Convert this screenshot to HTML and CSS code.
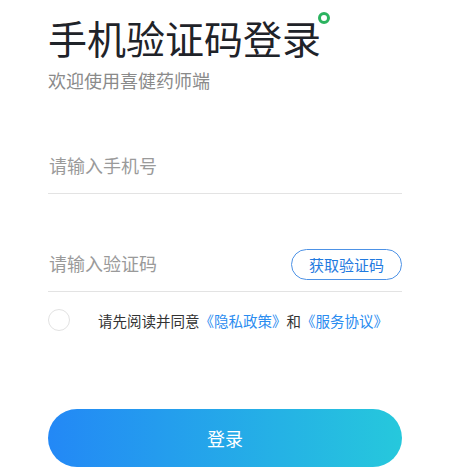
FILE: index.html
```html
<!DOCTYPE html>
<html>
<head>
  <meta charset="utf-8">
  <title>手机验证码登录</title>
  <link rel="stylesheet" href="styles.css">
</head>
<body>
  <div class="page">
    <div class="header">
      <h1 class="title">手机验证码登录<span class="dot"></span></h1>
      <p class="subtitle">欢迎使用喜健药师端</p>
    </div>

    <form class="login-form">
      <div class="field">
        <input type="text" name="phone" placeholder="请输入手机号">
      </div>
      <div class="field field-code">
        <input type="text" name="code" placeholder="请输入验证码">
        <button type="button" class="code-button">获取验证码</button>
      </div>

      <div class="agree-row">
        <span class="check"></span>
        <span class="agree-text">请先阅读并同意<a href="#">《隐私政策》</a>和<a href="#">《服务协议》</a></span>
      </div>

      <button type="button" class="login-button">登录</button>
    </form>
  </div>
</body>
</html>
```

FILE: styles.css
```css
body {
  margin: 0;
  padding: 0;
  background-color: #fff;
  font-family: "Noto Sans CJK SC", "Noto Sans", sans-serif;
}

.page {
  padding: 13px 48px 0 48px;
}

/* Title with the little green ring at its corner */
.title {
  position: relative;
  display: inline-block;
  margin: 0;
  font-size: 39px;
  font-weight: normal;
  line-height: 48px;
  color: #1f2329;
}

.dot {
  position: absolute;
  right: -9px;
  top: -1px;
  width: 6px;
  height: 6px;
  border: 3px solid #2bb35f;
  border-radius: 50%;
}

.subtitle {
  margin: 7px 0 0 0;
  font-size: 18px;
  line-height: 24px;
  color: #8a8a8a;
}

.login-form {
  margin-top: 48px;
}

.field {
  display: flex;
  align-items: center;
  height: 53px;
  border-bottom: 1px solid #e3e3e3;
}

.field-code {
  margin-top: 44px;
}

.field input {
  flex: 1;
  min-width: 0;
  border: none;
  outline: none;
  padding: 0 0 4px 1px;
  font-family: inherit;
  font-size: 18px;
  color: #333;
  background: transparent;
}

.field input::placeholder {
  color: #9a9a9a;
}

.code-button {
  width: 111px;
  height: 31px;
  padding: 0;
  border: 1px solid #4d92e6;
  border-radius: 16px;
  background-color: #fff;
  color: #1f7ae0;
  font-family: inherit;
  font-size: 15px;
  cursor: pointer;
}

.agree-row {
  display: flex;
  align-items: center;
  margin-top: 17px;
  height: 22px;
}

.check {
  width: 20px;
  height: 20px;
  border: 1px solid #e2e2e2;
  border-radius: 50%;
  box-sizing: content-box;
}

.agree-text {
  margin-left: 28px;
  font-size: 14.5px;
  color: #333;
}

.agree-text a {
  color: #2a8cf0;
  text-decoration: none;
}

.login-button {
  display: block;
  width: 100%;
  height: 58px;
  margin-top: 78px;
  border: none;
  border-radius: 29px;
  background: linear-gradient(to right, #2388f6, #26c8dc);
  color: #fff;
  font-family: inherit;
  font-size: 18px;
  cursor: pointer;
}
```
